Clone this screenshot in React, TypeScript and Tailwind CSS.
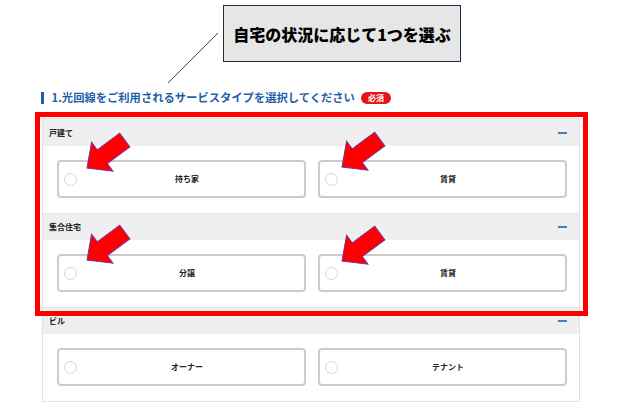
import React from "react";

type Section = { title: string; options: string[] };

const sections: Section[] = [
  { title: "戸建て", options: ["持ち家", "賃貸"] },
  { title: "集合住宅", options: ["分譲", "賃貸"] },
  { title: "ビル", options: ["オーナー", "テナント"] },
];

// arrow tips in page coordinates
const arrows = [
  { x: 87, y: 168 },
  { x: 342, y: 167 },
  { x: 87, y: 260 },
  { x: 342, y: 261 },
];

function Arrow({ x, y }: { x: number; y: number }) {
  return (
    <svg
      className="absolute"
      style={{ left: x - 3, top: y - 38 }}
      width="50"
      height="44"
      viewBox="0 0 50 44"
    >
      <polygon
        transform="translate(3 38) rotate(-36.5)"
        points="0,0 19,-18 19,-8.5 47,-8.5 47,8.5 19,8.5 19,18"
        fill="#ff0000"
        stroke="#7a2fa0"
        strokeWidth="1"
        strokeLinejoin="miter"
      />
    </svg>
  );
}

function OptionButton({ label }: { label: string }) {
  return (
    <div className="flex h-[38px] items-center rounded-[4px] border-2 border-[#cbcbcb] bg-white">
      <span className="ml-[5px] h-[13px] w-[13px] shrink-0 rounded-full border border-[#d6d6d6] bg-white" />
      <span className="flex-1 pr-[7px] text-center text-[8px] font-bold text-[#222]">{label}</span>
    </div>
  );
}

export default function App() {
  return (
    <div className="relative h-[412px] w-[628px] overflow-hidden bg-white font-['Noto_Sans_CJK_JP','Noto_Sans',sans-serif]">
      {/* callout */}
      <div className="ml-[223px] mt-[5px] flex h-[57px] w-[238px] items-center justify-center border-[1.5px] border-[#1f2a44] bg-[#e6e6e6] text-[16px] font-black text-black">
        自宅の状況に応じて1つを選ぶ
      </div>

      {/* title */}
      <div className="ml-[41px] mt-[28px] flex h-[16px] items-center">
        <span className="h-[12px] w-[2.5px] bg-[#1f5fa8]" />
        <span className="ml-[8px] text-[11.3px] font-bold leading-none text-[#1f5fa8]">
          1.光回線をご利用されるサービスタイプを選択してください
        </span>
        <span className="ml-[6px] flex h-[12px] w-[30px] items-center justify-center rounded-full bg-[#e4161b] text-[8px] font-bold leading-none text-white">
          必須
        </span>
      </div>

      {/* form */}
      <div className="ml-[42px] mt-[12px] w-[538px] border border-[#e2e2e2]">
        {sections.map((s, i) => (
          <div key={i}>
            <div
              className={
                "flex h-[27px] items-center justify-between bg-[#efefef] pl-[6px] pr-[12px] " +
                (i > 0 ? "border-t border-[#e4e4e4]" : "")
              }
            >
              <span className="text-[8px] font-bold text-[#222]">{s.title}</span>
              <span className="h-[2px] w-[9px] bg-[#4d7db3]" />
            </div>
            <div className="grid grid-cols-2 gap-3 bg-white pb-[15px] pl-[14px] pr-[12px] pt-[14px]">
              {s.options.map((o) => (
                <OptionButton key={o} label={o} />
              ))}
            </div>
          </div>
        ))}
      </div>

      {/* annotations */}
      <svg className="pointer-events-none absolute left-0 top-0" width="628" height="412">
        <line x1="218" y1="33" x2="168" y2="83" stroke="#444" strokeWidth="1" />
      </svg>
      <div className="pointer-events-none absolute left-[35px] top-[112px] h-[204px] w-[553px] border-[5px] border-[#ff0000]" />
      {arrows.map((a, i) => (
        <Arrow key={i} x={a.x} y={a.y} />
      ))}
    </div>
  );
}
